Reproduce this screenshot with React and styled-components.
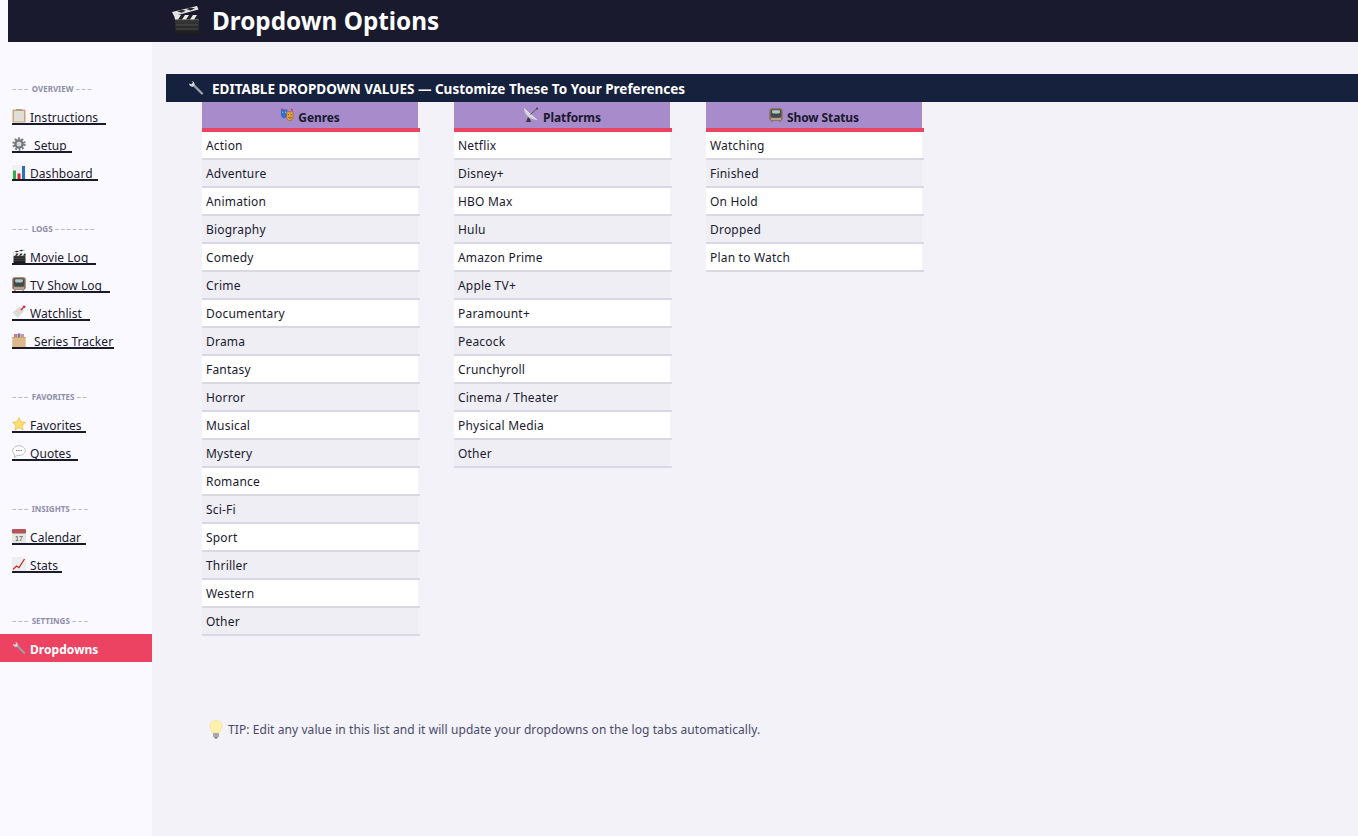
import React from "react";
import styled, { createGlobalStyle } from "styled-components";

const GlobalStyle = createGlobalStyle`
  html, body {
    margin: 0;
    padding: 0;
    background: #faf9ff;
  }
  body {
    font-family: "Noto Sans", "Open Sans", sans-serif;
  }
`;

const Page = styled.div`
  width: 1358px;
  height: 836px;
  overflow: hidden;
  display: flex;
  flex-direction: column;
  background: #faf9ff;
`;

const Header = styled.header`
  height: 42px;
  box-sizing: border-box;
  margin-left: 8px;
  padding: 0 0 2px 164px;
  display: flex;
  align-items: center;
  gap: 12px;
  background: #1a1a2e;
  color: #fff;
  font-size: 24.3px;
  font-weight: 700;
`;

const Body = styled.div`
  flex: 1;
  display: flex;
  min-height: 0;
`;

const Sidebar = styled.nav`
  width: 152px;
  padding-top: 32px;
  flex: none;
`;

const Group = styled.div`
  margin-bottom: 28px;
`;

const GroupLabel = styled.div`
  height: 28px;
  padding: 1px 0 0 12px;
  box-sizing: border-box;
  display: flex;
  align-items: center;
  gap: 2px;
  font-size: 8px;
  font-weight: 700;
  color: #8f8fa8;
  white-space: pre;
`;

const Dashes = styled.span`
  color: #a9a9bb;
  font-size: 9px;
  font-weight: 400;
  letter-spacing: 1.4px;
`;

const NavRow = styled.div`
  height: 28px;
  box-sizing: border-box;
  padding: 3px 0 0 12px;
  display: flex;
  align-items: flex-start;
  background: ${(p) => (p.$active ? "#ec4363" : "transparent")};
`;

const NavLink = styled.a`
  display: flex;
  align-items: flex-end;
  height: 20px;
  box-sizing: border-box;
  padding-right: ${(p) => p.$pad ?? 6}px;
  gap: ${(p) => (p.$wide ? "8px" : "4px")};
  font-size: 12px;
  letter-spacing: 0.05px;
  color: ${(p) => (p.$active ? "#fff" : "#1a1a2e")};
  font-weight: ${(p) => (p.$active ? 700 : 400)};
  border-bottom: 2px solid ${(p) => (p.$active ? "transparent" : "#1a1a2e")};
`;

const NavName = styled.span`
  line-height: 10px;
`;

const Main = styled.main`
  flex: 1;
  min-width: 0;
  padding: 32px 0 0 14px;
  background: #f2f2f8;
`;

const SectionBar = styled.div`
  height: 28px;
  padding-left: 22px;
  display: flex;
  align-items: center;
  gap: 8px;
  background: #16213e;
  color: #fff;
  font-size: 13.5px;
  font-weight: 700;
`;

const BarText = styled.span`
  margin-top: 2px;
`;

const Columns = styled.div`
  margin-left: 36px;
  display: flex;
  align-items: flex-start;
  gap: 34px;
`;

const Column = styled.section`
  width: 218px;
`;

const ColumnHead = styled.div`
  height: 26px;
  width: 216px;
  display: flex;
  align-items: center;
  justify-content: center;
  gap: 4px;
  background: #a78bca;
  color: #1a1a2e;
  font-size: 12px;
  font-weight: 700;
  letter-spacing: -0.1px;
`;

const HeadTitle = styled.span`
  margin-top: 4px;
`;

const RedRule = styled.div`
  height: 4px;
  background: #e94560;
`;

const Row = styled.div`
  height: 28px;
  box-sizing: border-box;
  border-bottom: 2px solid #d9d8e4;
`;

const Cell = styled.div`
  height: 26px;
  width: 216px;
  box-sizing: border-box;
  padding-left: 4px;
  display: flex;
  align-items: center;
  font-size: 12px;
  letter-spacing: 0.2px;
  color: #1a1a2e;
  background: ${(p) => (p.$odd ? "#eeeef4" : "#fff")};
`;

const Tip = styled.p`
  margin: 84px 0 0 43px;
  display: flex;
  align-items: center;
  gap: 5px;
  font-size: 12px;
  letter-spacing: 0.08px;
  color: #4a4a6a;
`;

const Clapper = ({ size = 14 }) => (
  <svg width={size} height={size} viewBox="0 0 28 28">
    <defs>
      <linearGradient id="clapBody" x1="0" y1="0" x2="0" y2="1">
        <stop offset="0" stopColor="#3a3a3a" />
        <stop offset="1" stopColor="#1c1c1c" />
      </linearGradient>
    </defs>
    <rect x="3" y="13" width="24" height="15" fill="url(#clapBody)" />
    <path d="M4 19h22M4 23h22" stroke="#5c5c5c" strokeWidth="0.8" />
    <path d="M2 9h25v4.500H3z" fill="#e9e9e9" />
    <path d="M6 13.500l3-4.500h4l-3 4.500zM14 13.500l3-4.500h4l-3 4.500zM22 13.500l3-4.500h2v4.500z" fill="#222" />
    <path d="M0 6L25 0l1.500 3.500L2 10z" fill="#e4e4e4" />
    <path d="M5 5.200l5-1.500 4 1-4.500 2zM14 3l5-1.500 4 1-4.500 2z" fill="#2a2a2a" />
  </svg>
);

const Clipboard = () => (
  <svg width="14" height="14" viewBox="0 0 14 14">
    <rect x="0.5" y="0.500" width="13" height="13" rx="1" fill="#c9a57a" />
    <rect x="2" y="2" width="10" height="10.500" fill="#dfdfd8" />
    <rect x="4" y="0" width="6" height="1.500" fill="#a89c8c" />
  </svg>
);

const Gear = () => (
  <svg width="14" height="14" viewBox="0 0 14 14">
    <circle cx="7" cy="7" r="5.400" fill="none" stroke="#7f8488" strokeWidth="2.600" strokeDasharray="1.900 1.500" />
    <circle cx="7" cy="7" r="4.700" fill="#6f7478" />
    <circle cx="7" cy="7" r="2.500" fill="#d5d8da" />
  </svg>
);

const BarChart = () => (
  <svg width="14" height="14" viewBox="0 0 14 14">
    <rect x="0" y="0" width="14" height="14" fill="#f1f1f3" />
    <rect x="1" y="5.500" width="3" height="8.500" fill="#2fae4a" />
    <rect x="5.500" y="8.500" width="3" height="5.500" fill="#d8262c" />
    <rect x="10" y="1" width="3" height="13" fill="#2b6fc0" />
  </svg>
);

const Tv = () => (
  <svg width="14" height="14" viewBox="0 0 14 14">
    <rect x="0.300" y="0.300" width="13.400" height="12.400" rx="2.200" fill="#8a6d58" />
    <rect x="1.800" y="1.500" width="10.400" height="8" rx="2.200" fill="#3b4d4d" />
    <rect x="3" y="2.300" width="8" height="3.200" rx="1.400" fill="#b7c6c3" />
    <rect x="2" y="10.300" width="10" height="1.500" fill="#cdb097" />
    <path d="M2.500 13l1 1M11.500 13l-1 1" stroke="#555" />
  </svg>
);

const Memo = () => (
  <svg width="14" height="14" viewBox="0 0 15 15">
    <path d="M0.500 8L8 1.500l5 5L6 14z" fill="#e3dcd3" />
    <path d="M3 8.500l4-3.500M5 10.500l4-3.500" stroke="#cfc8be" strokeWidth="0.700" />
    <path d="M9.500 5.500l3-3" stroke="#c8324a" strokeWidth="1.600" />
    <circle cx="13" cy="2" r="1.500" fill="#d8324f" />
  </svg>
);

const FileBox = () => (
  <svg width="14" height="14" viewBox="0 0 14 14">
    <rect x="2" y="1" width="3" height="4" fill="#d77" />
    <rect x="5.500" y="0.500" width="3" height="4.500" fill="#77a" />
    <rect x="9" y="1" width="3" height="4" fill="#c98" />
    <rect x="0.300" y="4" width="13.400" height="10" fill="#ddb88a" />
    <rect x="0.300" y="4" width="13.400" height="1" fill="#c9a06c" />
  </svg>
);

const Star = () => (
  <svg width="14" height="14" viewBox="0 0 15 15">
    <path d="M7.500 .5l2.100 4.600 5 .6-3.700 3.400 1 4.900-4.400-2.500-4.400 2.500 1-4.900L.4 5.700l5-.6z" fill="#fadf6e" stroke="#f0b93a" strokeWidth="0.700" />
  </svg>
);

const Speech = () => (
  <svg width="14" height="14" viewBox="0 0 15 15">
    <path d="M7.500 .8c3.700 0 6.700 2.300 6.700 5.200s-3 5.200-6.700 5.200c-.7 0-1.400-.1-2-.2L2.600 13.600l.6-3C1.700 9.600.8 7.900.8 6 .8 3.100 3.800.8 7.500.8z" fill="#fff" stroke="#a8a8a8" strokeWidth="0.800" />
    <path d="M4.500 6h1.200M6.900 6h1.200M9.300 6h1.200" stroke="#666" strokeWidth="1.100" />
  </svg>
);

const CalendarIcon = () => (
  <svg width="14" height="14" viewBox="0 0 14 14">
    <rect x="0" y="0" width="14" height="14" rx="1" fill="#e6e6e2" />
    <rect x="0" y="0" width="14" height="4.500" rx="1" fill="#b5545a" />
    <text x="7" y="12" textAnchor="middle" fontSize="7" fontFamily="Liberation Sans, sans-serif" fill="#444">17</text>
  </svg>
);

const LineChart = () => (
  <svg width="14" height="14" viewBox="0 0 14 14">
    <rect x="0" y="0" width="14" height="14" fill="#eceef0" />
    <path d="M1 12.500l3.500-3.500 2.500 1.500L12.500 2" fill="none" stroke="#c8302f" strokeWidth="1.300" />
  </svg>
);

const Wrench = ({ size = 14 }) => (
  <svg width={size} height={size} viewBox="0 0 16 16">
    <path d="M5 4.500L14 13.500" stroke="#9aa0a6" strokeWidth="2.400" strokeLinecap="round" />
    <path d="M1 3.500a3.300 3.300 0 0 0 4.300 3l1.200-1.200a3.300 3.300 0 0 0-3-4.300L5 2.800 3.500 4.300z" fill="#d5d8da" />
  </svg>
);

const Masks = () => (
  <svg width="14" height="14" viewBox="0 0 14 15">
    <path d="M.5 1.500h7v6c0 2-1.500 3.500-3.500 3.500S.5 9.500.5 7.500z" fill="#2f6fd0" />
    <path d="M6.500 4h7v5.500c0 2.500-1.500 4-3.500 4s-3.500-1.500-3.500-4z" fill="#e0a038" stroke="#8a4a20" strokeWidth="0.500" />
    <path d="M8 7h1.200M10.800 7H12M8.500 10c1 1 2.500 1 3.500 0" stroke="#6b3a15" strokeWidth="0.800" fill="none" />
    <path d="M1 .5l2 1.500M13 3l-1.500-2" stroke="#d03030" strokeWidth="1.200" />
    <path d="M2 4.500h1M5 4.500h1" stroke="#fff" strokeWidth="0.900" />
  </svg>
);

const Dish = () => (
  <svg width="16" height="16" viewBox="0 0 16 16">
    <path d="M5 10l-2 5h5l-1-3z" fill="#3a3a3c" />
    <path d="M1 1.500c.5 6 5 11 13 11.500z" fill="#d4d6d8" />
    <path d="M1 1.500L14 13" stroke="#eeeeee" strokeWidth="0.800" />
    <path d="M7.500 7.500L13.500 2" stroke="#55585a" strokeWidth="1" />
    <circle cx="14" cy="1.700" r="1.100" fill="#4a4a4c" />
  </svg>
);

const Bulb = () => (
  <svg width="14" height="19" viewBox="0 0 14 19">
    <path d="M7 .5c3.500 0 6 2.500 6 5.700 0 2.600-2 3.800-2.600 6.800H3.600C3 10 1 8.800 1 6.200 1 3 3.500.5 7 .5z" fill="#fdf2ab" stroke="#f0dc8c" strokeWidth="0.600" />
    <rect x="4" y="13" width="6" height="4" rx="1" fill="#a8a8ac" />
    <rect x="5.500" y="17" width="3" height="1.500" fill="#777" />
  </svg>
);

const navGroups = [
  {
    label: "OVERVIEW",
    tail: 3,
    items: [
      { name: "Instructions", icon: <Clipboard />, pad: 8 },
      { name: "Setup", icon: <Gear />, wide: true, pad: 5 },
      { name: "Dashboard", icon: <BarChart />, pad: 5 },
    ],
  },
  {
    label: "LOGS",
    tail: 7,
    items: [
      { name: "Movie Log", icon: <Clapper />, pad: 8 },
      { name: "TV Show Log", icon: <Tv />, pad: 8 },
      { name: "Watchlist", icon: <Memo />, pad: 8 },
      { name: "Series Tracker", icon: <FileBox />, wide: true, pad: 1 },
    ],
  },
  {
    label: "FAVORITES",
    tail: 2,
    items: [
      { name: "Favorites", icon: <Star />, pad: 4 },
      { name: "Quotes", icon: <Speech />, pad: 7 },
    ],
  },
  {
    label: "INSIGHTS",
    tail: 3,
    items: [
      { name: "Calendar", icon: <CalendarIcon />, pad: 5 },
      { name: "Stats", icon: <LineChart />, pad: 4 },
    ],
  },
  {
    label: "SETTINGS",
    tail: 3,
    items: [{ name: "Dropdowns", icon: <Wrench />, active: true }],
  },
];

const lists = [
  {
    title: "Genres",
    icon: <Masks />,
    values: ["Action", "Adventure", "Animation", "Biography", "Comedy", "Crime", "Documentary", "Drama", "Fantasy", "Horror", "Musical", "Mystery", "Romance", "Sci-Fi", "Sport", "Thriller", "Western", "Other"],
  },
  {
    title: "Platforms",
    icon: <Dish />,
    values: ["Netflix", "Disney+", "HBO Max", "Hulu", "Amazon Prime", "Apple TV+", "Paramount+", "Peacock", "Crunchyroll", "Cinema / Theater", "Physical Media", "Other"],
  },
  {
    title: "Show Status",
    icon: <Tv />,
    values: ["Watching", "Finished", "On Hold", "Dropped", "Plan to Watch"],
  },
];

export default function App() {
  return (
    <Page>
      <GlobalStyle />
      <Header>
        <Clapper size={28} />
        <span>Dropdown Options</span>
      </Header>
      <Body>
        <Sidebar>
          {navGroups.map((group) => (
            <Group key={group.label}>
              <GroupLabel>
                <Dashes>{"–––"}</Dashes>
                {group.label}
                <Dashes>{"–".repeat(group.tail)}</Dashes>
              </GroupLabel>
              {group.items.map((item) => (
                <NavRow key={item.name} $active={item.active}>
                  <NavLink $active={item.active} $wide={item.wide} $pad={item.pad}>
                    {item.icon}
                    <NavName>{item.name}</NavName>
                  </NavLink>
                </NavRow>
              ))}
            </Group>
          ))}
        </Sidebar>
        <Main>
          <SectionBar>
            <Wrench size={16} />
            <BarText>EDITABLE DROPDOWN VALUES — Customize These To Your Preferences</BarText>
          </SectionBar>
          <Columns>
            {lists.map((list) => (
              <Column key={list.title}>
                <ColumnHead>
                  {list.icon}
                  <HeadTitle>{list.title}</HeadTitle>
                </ColumnHead>
                <RedRule />
                {list.values.map((value, i) => (
                  <Row key={value}>
                    <Cell $odd={i % 2 === 1}>{value}</Cell>
                  </Row>
                ))}
              </Column>
            ))}
          </Columns>
          <Tip>
            <Bulb />
            TIP: Edit any value in this list and it will update your dropdowns on the log tabs automatically.
          </Tip>
        </Main>
      </Body>
    </Page>
  );
}
